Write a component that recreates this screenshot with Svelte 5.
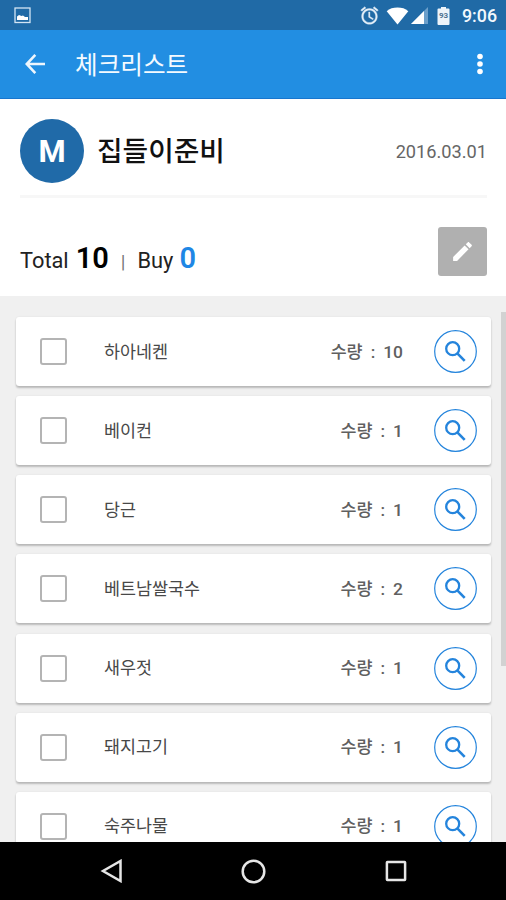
<script>
    const battery = 93;

    let items = $state([
        { name: '하아네켄', count: 10, checked: false },
        { name: '베이컨', count: 1, checked: false },
        { name: '당근', count: 1, checked: false },
        { name: '베트남쌀국수', count: 2, checked: false },
        { name: '새우젓', count: 1, checked: false },
        { name: '돼지고기', count: 1, checked: false },
        { name: '숙주나물', count: 1, checked: false },
    ]);

    const total = 10;
    let bought = $derived(items.filter((item) => item.checked).length);
</script>

<div class="screen">
    <div class="status-bar">
        <svg class="picture" width="17" height="17" viewBox="0 0 17 17">
            <rect x="1" y="1" width="15" height="14.5" fill="none" stroke="#d3e5f4" stroke-width="1.3" />
            <path d="M3 13V9.5l2-1.5 2.500 1L9 8.500l2 1.500h3V13z" fill="#fff" />
        </svg>
        <div class="status-right">
            <svg class="alarm" width="21" height="21" viewBox="0 0 24 24" fill="#e4eff8" stroke="#e4eff8" stroke-width="0.4">
                <path d="M22 5.720l-4.600-3.860-1.290 1.530 4.600 3.860L22 5.720zM7.880 3.390L6.600 1.860 2 5.710l1.290 1.530 4.590-3.850zM12.500 8H11v6l4.750 2.850.75-1.230-4-2.370V8zM12 4c-4.970 0-9 4.030-9 9s4.020 9 9 9c4.970 0 9-4.030 9-9s-4.030-9-9-9zm0 16c-3.870 0-7-3.130-7-7s3.130-7 7-7 7 3.130 7 7-3.130 7-7 7z" />
            </svg>
            <svg class="wifi" width="23" height="18" viewBox="0 0 23 18">
                <path d="M11.500 17.500L.7 4.200C3.600 1.600 7.200.5 11.500.5s7.900 1.100 10.800 3.700z" fill="#fff" />
            </svg>
            <svg class="signal" width="17" height="17" viewBox="0 0 17 17">
                <path d="M0 17L17 0v17z" fill="#6c9fca" />
                <path d="M0 17L13 4v13z" fill="#fff" />
            </svg>
            <svg class="battery" width="13" height="18" viewBox="0 0 13 18">
                <path d="M4 0h5v1.500h2.500q1 0 1 1V17q0 1-1 1h-10q-1 0-1-1V2.500q0-1 1-1H4z" fill="#edf4fa" />
                <text x="6.500" y="11.300" text-anchor="middle">{battery}</text>
            </svg>
            <span class="clock">9:06</span>
        </div>
    </div>

    <header class="app-bar">
        <svg class="back" width="20" height="20" viewBox="0 0 20 20" fill="none" stroke="#eef6fd" stroke-width="2.600">
            <path d="M10.300.9L1.700 10l8.600 9.100M2 10h18" />
        </svg>
        <h1>체크리스트</h1>
        <svg class="more" width="8" height="22" viewBox="0 0 8 22" fill="#fff">
            <circle cx="4" cy="3.500" r="2.800" />
            <circle cx="4" cy="11" r="2.800" />
            <circle cx="4" cy="18.500" r="2.800" />
        </svg>
    </header>

    <section class="summary">
        <div class="owner">
            <div class="avatar">M</div>
            <h2>집들이준비</h2>
            <span class="date">2016.03.01</span>
        </div>
        <div class="totals">
            <div class="counts">
                <span>Total</span>
                <b>{total}</b>
                <span class="bar">|</span>
                <span>Buy</span>
                <b class="buy">{bought}</b>
            </div>
            <button class="edit" aria-label="edit">
                <svg width="25" height="25" viewBox="0 0 24 24" fill="#fff">
                    <path d="M3 17.250V21h3.750L17.810 9.940l-3.750-3.750L3 17.250zM20.710 7.040c.39-.39.39-1.020 0-1.410l-2.340-2.340c-.39-.39-1.020-.39-1.410 0l-1.830 1.830 3.750 3.750 1.830-1.830z" />
                </svg>
            </button>
        </div>
    </section>

    <main>
        <ul>
            {#each items as item}
                <li>
                    <input type="checkbox" bind:checked={item.checked} aria-label={item.name} />
                    <span class="name">{item.name}</span>
                    <span class="amount"><span>수량</span><span class="colon">:</span><span>{item.count}</span></span>
                    <button class="search" aria-label="search">
                        <svg width="43" height="43" viewBox="0 0 43 43" fill="none" stroke="#2484dc">
                            <circle cx="21.500" cy="21.500" r="20.800" stroke-width="1.200" />
                            <circle cx="18.700" cy="18.700" r="6.500" stroke-width="2.300" />
                            <path d="M23.300 23.300l7.400 7.500" stroke-width="2.600" />
                        </svg>
                    </button>
                </li>
            {/each}
        </ul>
        <div class="scrollbar"></div>
    </main>

    <nav>
        <svg width="22" height="24" viewBox="0 0 22 24">
            <path d="M20.500 2v20L3 12z" />
        </svg>
        <svg width="25" height="25" viewBox="0 0 25 25">
            <circle cx="12.500" cy="12.500" r="10.800" />
        </svg>
        <svg width="22" height="22" viewBox="0 0 22 22">
            <rect x="1.900" y="1.900" width="18.200" height="18.200" rx="0.500" />
        </svg>
    </nav>
</div>

<style>
    :global(body) {
        margin: 0;
    }
    .screen {
        display: flex;
        flex-direction: column;
        width: 506px;
        height: 900px;
        overflow: hidden;
        background: #fff;
        font-family: Roboto, "Noto Sans CJK KR", sans-serif;
    }
    h1, h2, ul {
        margin: 0;
        padding: 0;
    }
    button {
        padding: 0;
        border: none;
        background: none;
    }
    svg {
        display: block;
        flex-shrink: 0;
    }

    .status-bar {
        display: flex;
        flex-shrink: 0;
        align-items: center;
        justify-content: space-between;
        box-sizing: border-box;
        height: 30px;
        padding: 1px 9px 0 14px;
        background: #206aa6;
    }
    .status-right {
        display: flex;
        align-items: center;
    }
    .wifi {
        margin-left: 6px;
    }
    .signal {
        margin-left: 2px;
    }
    .battery {
        margin-left: 9px;
    }
    .battery text {
        font-size: 8px;
        font-weight: 700;
        fill: #4e7391;
    }
    .clock {
        margin-left: 12px;
        color: #f2f8fd;
        font-size: 17.800px;
        font-weight: 500;
        line-height: 29px;
    }

    .app-bar {
        display: flex;
        flex-shrink: 0;
        align-items: center;
        box-sizing: border-box;
        height: 69px;
        padding: 0 22px 0 25px;
        border-bottom: 1px solid #1876ce;
        background: #228ee2;
    }
    h1 {
        flex: 1;
        margin-left: 30px;
        padding-top: 3px;
        color: #f4faff;
        font-size: 24.600px;
        font-weight: 400;
        line-height: 36px;
    }

    .summary {
        flex-shrink: 0;
        box-sizing: border-box;
        height: 197px;
        padding: 0 19px 0 20px;
    }
    .owner {
        display: flex;
        align-items: center;
        box-sizing: border-box;
        height: 99px;
        padding-top: 8px;
        border-bottom: 3px solid #f7f7f7;
    }
    .avatar {
        width: 64px;
        height: 64px;
        border-radius: 50%;
        background: #206aa8;
        color: #fff;
        font-size: 31px;
        font-weight: 700;
        line-height: 66px;
        text-align: center;
    }
    h2 {
        flex: 1;
        margin-left: 13px;
        padding-top: 2px;
        color: #111;
        font-size: 27.800px;
        font-weight: 500;
        line-height: 40px;
    }
    .date {
        color: #666;
        font-size: 18.200px;
    }
    .totals {
        display: flex;
        align-items: flex-start;
        justify-content: space-between;
        padding-top: 29px;
    }
    .counts {
        display: flex;
        align-items: baseline;
        padding-top: 14px;
        color: #222;
        font-size: 21.800px;
    }
    .counts b {
        margin-left: 7px;
        color: #000;
        font-size: 29px;
        font-weight: 600;
    }
    .counts .bar {
        margin: 0 12px;
        color: #777;
        font-size: 19px;
    }
    .counts b.buy {
        margin-left: 6px;
        color: #1f87e5;
    }
    .edit {
        display: flex;
        align-items: center;
        justify-content: center;
        width: 49px;
        height: 49px;
        border-radius: 3px;
        background: #b0b0b0;
    }

    main {
        display: flex;
        flex: 1;
        align-items: flex-start;
        min-height: 0;
        overflow: hidden;
        background: #f0f0f0;
    }
    ul {
        display: flex;
        flex: 1;
        flex-direction: column;
        gap: 10.150px;
        padding: 21px 10px 0 16px;
        list-style: none;
    }
    li {
        display: flex;
        align-items: center;
        box-sizing: border-box;
        height: 69px;
        padding: 0 14px 0 24px;
        border-radius: 3px;
        background: #fff;
        box-shadow: 0 2px 2px rgba(0, 0, 0, 0.220), 0 0 2px rgba(0, 0, 0, 0.080);
        color: #606060;
        font-size: 17.400px;
    }
    input {
        appearance: none;
        box-sizing: border-box;
        width: 27px;
        height: 27px;
        margin: 0;
        border: 2px solid #b4b4b4;
        border-radius: 3px;
        background: #fff;
    }
    input:checked {
        background: #228ee2;
    }
    .name {
        flex: 1;
        margin-left: 37px;
        padding-bottom: 3px;
        color: #484848;
    }
    .amount {
        display: flex;
        align-items: baseline;
        margin-right: 31px;
        padding-bottom: 3px;
        font-weight: 500;
    }
    .colon {
        margin: 0 8px;
    }
    .scrollbar {
        width: 5px;
        height: 354px;
        margin-top: 16px;
        background: #d2d2d2;
    }

    nav {
        display: flex;
        flex-shrink: 0;
        align-items: center;
        justify-content: space-between;
        box-sizing: border-box;
        height: 58px;
        padding: 0 99px 0 100px;
        background: #000;
    }
    nav svg {
        fill: none;
        stroke: #e6e6e6;
        stroke-width: 2.500;
    }
</style>
